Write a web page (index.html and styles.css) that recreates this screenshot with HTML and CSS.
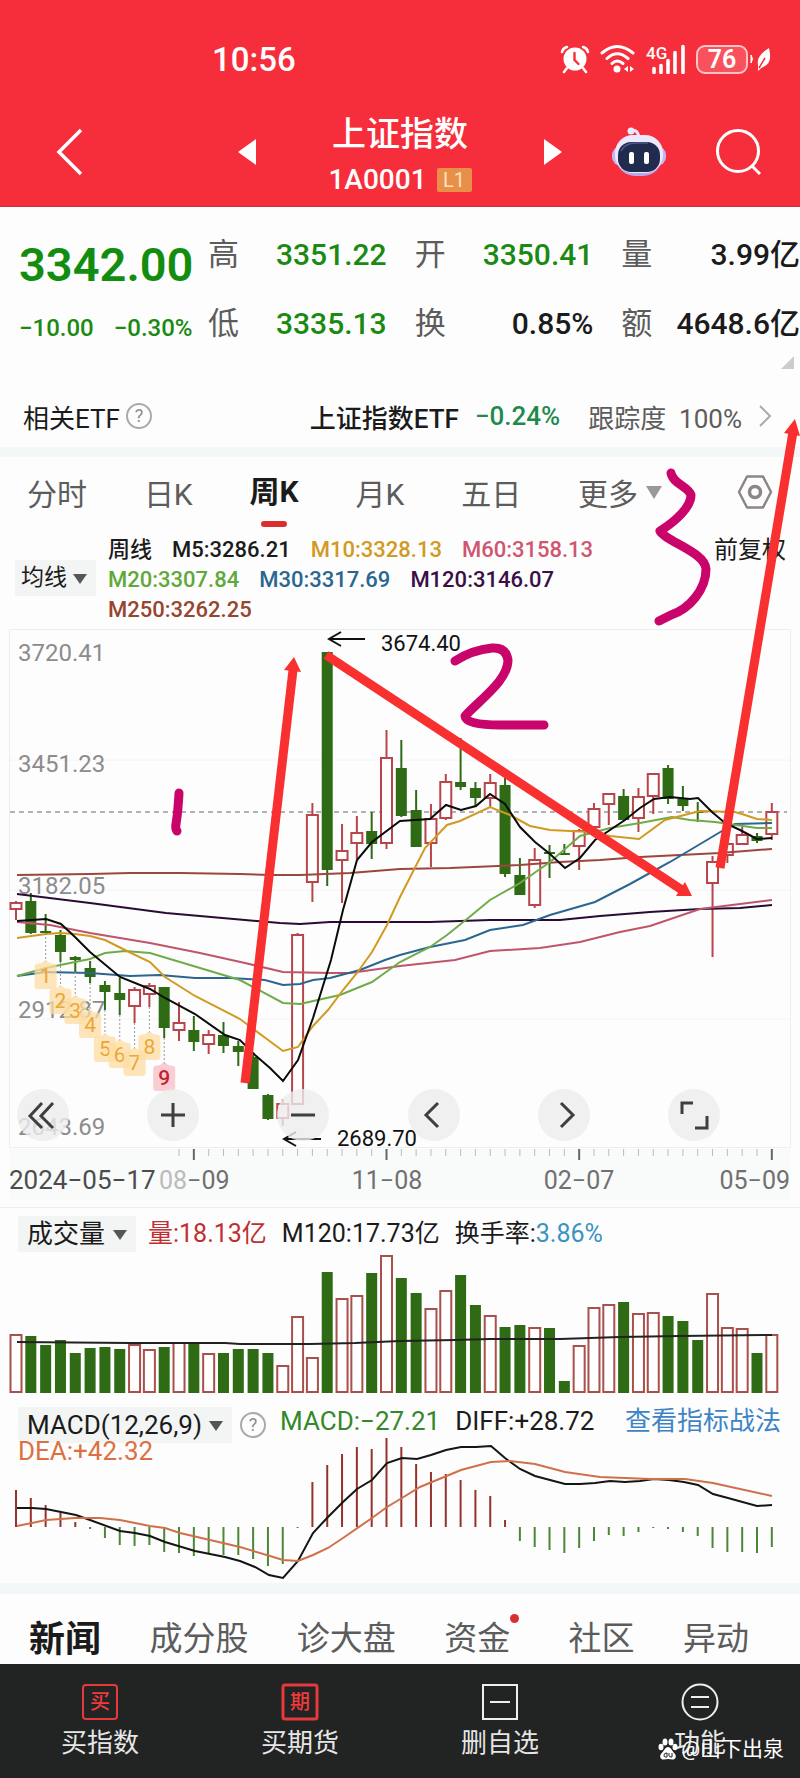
FILE: index.html
```html
<!DOCTYPE html>
<html lang="zh-CN">
<head>
    <meta charset="UTF-8">
    <meta name="viewport" content="width=device-width, initial-scale=1.0">
    <title>上证指数 1A0001</title>
    <link rel="stylesheet" href="styles.css">
</head>
<body>
<div class="page">
    <header class="header">
        <div class="status-bar">
            <span class="clock">10:56</span>
            <div class="status-icons">
                <svg width="30" height="30" viewBox="0 0 30 30" fill="none" stroke="#fff" stroke-linecap="round">
                    <circle cx="15" cy="15" r="11.5" fill="#fff" stroke="none"/>
                    <path d="M2 8Q3 4 7 3M28 8Q27 4 23 3M7 24l-3 4M23 24l3 4" stroke-width="2.6"/>
                    <path d="M14.500 9v7l4 4" stroke="#f62e3b" stroke-width="2.4"/>
                </svg>
                <svg width="36" height="30" viewBox="0 0 36 30" fill="none" stroke="#fff" stroke-width="3" stroke-linecap="round">
                    <path d="M2 9Q17-4 33 9M7 14.500Q17 5 28 14.500M12 19.500Q17 14.500 23 19.500"/>
                    <circle cx="17" cy="25" r="3.500" fill="#fff" stroke="none"/>
                    <path d="M24 25l4-3v6zM34 25l-4-3v6z" fill="#fff" stroke="none"/>
                </svg>
                <svg width="40" height="30" viewBox="0 0 40 30">
                    <text x="0" y="15" class="net-text">4G</text>
                    <path d="M8 28.500v-4M15 28.500v-7M22 28.500v-12M29 28.500v-20M37 28.500v-26" stroke="#fff" stroke-width="3.600" stroke-linecap="round"/>
                </svg>
                <span class="battery">76</span>
                <svg width="22" height="30" viewBox="0 0 22 30">
                    <path d="M1 11q3 4 0 8z" fill="#fff" stroke="#fff"/>
                    <path d="M8 21Q6 12 19 4Q23 20 13 23Q11 24 8 27z" fill="#fff"/>
                    <path d="M9 24L15 14" stroke="#f62e3b" stroke-width="1.5"/>
                </svg>
            </div>
        </div>
        <nav class="nav">
            <button class="icon-btn back" aria-label="返回">
                <svg width="28" height="48" viewBox="0 0 28 48" fill="none" stroke="#fff" stroke-width="3.500"><path d="M25 2L3 24L25 46"/></svg>
            </button>
            <div class="nav-center">
                <button class="icon-btn" aria-label="上一个">
                    <svg width="18" height="26" viewBox="0 0 18 26"><path d="M18 0v26L0 13z" fill="#fff"/></svg>
                </button>
                <div class="nav-title">
                    <h1>上证指数</h1>
                    <div class="code">1A0001 <span class="level">L1</span></div>
                </div>
                <button class="icon-btn" aria-label="下一个">
                    <svg width="18" height="26" viewBox="0 0 18 26"><path d="M0 0v26L18 13z" fill="#fff"/></svg>
                </button>
            </div>
            <div class="nav-right">
                <button class="icon-btn" aria-label="智能助手">
                    <svg width="54" height="50" viewBox="0 0 54 50">
                        <path d="M18 4q7-3 9 6" fill="none" stroke="#e6e4ff" stroke-width="3"/>
                        <circle cx="19" cy="4" r="3.500" fill="#e8e8ff"/>
                        <rect x="0" y="19" width="54" height="20" rx="9" fill="#c3b6f2"/>
                        <rect x="4" y="9" width="46" height="40" rx="19" fill="#b9a9ec"/>
                        <rect x="3" y="8" width="48" height="38" rx="18" fill="#ece9ff"/>
                        <rect x="6" y="15" width="42" height="30" rx="13" fill="#202b4d"/>
                        <path d="M9 24q4-8 15-8h12" fill="none" stroke="#4c5c8c" stroke-width="1.5"/>
                        <rect x="17" y="25" width="5" height="12" rx="2" fill="#fff"/>
                        <rect x="32" y="25" width="5" height="12" rx="2" fill="#fff"/>
                    </svg>
                </button>
                <button class="icon-btn" aria-label="搜索">
                    <svg width="46" height="48" viewBox="0 0 46 48" fill="none" stroke="#fff" stroke-width="3"><circle cx="23" cy="23" r="20.500"/><path d="M37 38l8 8"/></svg>
                </button>
            </div>
        </nav>
    </header>

    <main>
        <section class="quote">
            <div class="price-box">
                <div class="price">3342.00</div>
                <div class="change"><span>−10.00</span><span>−0.30%</span></div>
            </div>
            <dl class="stats">
                <div><dt>高</dt><dd class="down">3351.22</dd></div>
                <div><dt>开</dt><dd class="down">3350.41</dd></div>
                <div><dt>量</dt><dd>3.99亿</dd></div>
                <div><dt>低</dt><dd class="down">3335.13</dd></div>
                <div><dt>换</dt><dd>0.85%</dd></div>
                <div><dt>额</dt><dd>4648.6亿</dd></div>
            </dl>
            <span class="corner"></span>
        </section>

        <section class="etf">
            <span class="etf-label">相关ETF</span>
            <button class="help" aria-label="相关ETF说明">?</button>
            <a class="etf-link" href="#etf">
                <b>上证指数ETF</b>
                <span class="etf-change">−0.24%</span>
                <span class="track">跟踪度&nbsp; 100%</span>
                <svg width="14" height="24" viewBox="0 0 14 24" fill="none" stroke="#aaa" stroke-width="2"><path d="M2 2l10 10L2 22"/></svg>
            </a>
        </section>

        <nav class="periods">
            <a href="#min">分时</a>
            <a href="#day">日K</a>
            <a href="#week" class="active">周K</a>
            <a href="#month">月K</a>
            <a href="#five">五日</a>
            <button class="more">更多<i class="tri"></i></button>
            <button class="icon-btn" aria-label="图表设置">
                <svg width="36" height="36" viewBox="0 0 36 36" fill="none" stroke="#8c8686"><path d="M10 2.500h16L34 18l-8 15.500H10L2 18z" stroke-width="2.500" stroke-linejoin="round"/><circle cx="18" cy="18" r="5.500" stroke-width="3.500"/></svg>
            </button>
        </nav>

        <section class="averages">
            <div class="picker">
                <select class="picker-sm" aria-label="主图指标"><option>均线</option></select>
            </div>
            <div class="legend">
                <span>周线</span>
                <span>M5:3286.21</span>
                <span class="m10">M10:3328.13</span>
                <span class="m60">M60:3158.13</span>
                <span class="m20">M20:3307.84</span>
                <span class="m30">M30:3317.69</span>
                <span class="m120">M120:3146.07</span>
                <span class="m250">M250:3262.25</span>
            </div>
            <button class="adjust">前复权</button>
        </section>

        <section class="kline">
            <svg id="kline" class="chart" viewBox="0 625 800 575" role="img" aria-label="周K线图"></svg>
            <div class="tools">
                <button aria-label="更早"><svg viewBox="0 0 52 52"><path d="M25 14L13 27l12 12M36 14L24 27l12 12"/></svg></button>
                <button aria-label="放大"><svg viewBox="0 0 52 52"><path d="M26 14v24M14 26h24"/></svg></button>
                <button aria-label="缩小"><svg viewBox="0 0 52 52"><path d="M14 26h24"/></svg></button>
                <button aria-label="向左"><svg viewBox="0 0 52 52"><path d="M30 14L18 26l12 12"/></svg></button>
                <button aria-label="向右"><svg viewBox="0 0 52 52"><path d="M23 14l12 12l-12 12"/></svg></button>
                <button aria-label="全屏"><svg viewBox="0 0 52 52"><path d="M14 25V14h11M39 27v12H27"/></svg></button>
            </div>
        </section>

        <section class="volume">
            <div class="panel-head">
                <div class="picker">
                    <select class="picker-lg" aria-label="副图指标一"><option>成交量</option></select>
                </div>
                <span class="up">量:18.13亿</span>
                <span>M120:17.73亿</span>
                <span>换手率:<em>3.86%</em></span>
            </div>
            <svg id="volume" class="chart" viewBox="0 1252 800 148" role="img" aria-label="成交量"></svg>
        </section>

        <section class="macd">
            <div class="panel-head">
                <div class="picker">
                    <select class="picker-lg" aria-label="副图指标二"><option>MACD(12,26,9)</option></select>
                </div>
                <button class="help" aria-label="MACD说明">?</button>
                <span class="macd-value">MACD:−27.21</span>
                <span>DIFF:+28.72</span>
                <a href="#guide">查看指标战法</a>
            </div>
            <div class="dea">DEA:+42.32</div>
            <svg id="macd" class="chart" viewBox="0 1434 800 149" role="img" aria-label="MACD"></svg>
        </section>

        <nav class="news-tabs">
            <a href="#news" class="active">新闻</a>
            <a href="#members">成分股</a>
            <a href="#diagnose">诊大盘</a>
            <a href="#funds" class="dot">资金</a>
            <a href="#community">社区</a>
            <a href="#moves">异动</a>
        </nav>
    </main>

    <footer class="bottom-bar">
        <button>
            <svg width="38" height="38" viewBox="0 0 38 38"><rect x="2" y="2" width="34" height="34" rx="3" fill="none" stroke="#e5393c" stroke-width="2"/><text x="19" y="26" class="icon-text">买</text></svg>
            买指数
        </button>
        <button>
            <svg width="38" height="38" viewBox="0 0 38 38"><rect x="2" y="2" width="34" height="34" rx="2" fill="none" stroke="#e5393c" stroke-width="3"/><text x="19" y="26" class="icon-text">期</text></svg>
            买期货
        </button>
        <button>
            <svg width="38" height="38" viewBox="0 0 38 38" fill="none" stroke="#eee" stroke-width="2"><rect x="2" y="2" width="34" height="34"/><path d="M9 19h20"/></svg>
            删自选
        </button>
        <button>
            <svg width="38" height="38" viewBox="0 0 38 38" fill="none" stroke="#eee" stroke-width="2"><circle cx="19" cy="19" r="17.500"/><path d="M10 14h18M10 24h18"/></svg>
            功能
        </button>
        <div class="author">
            <svg width="20" height="22" viewBox="0 0 20 22" fill="#fff"><ellipse cx="3" cy="9" rx="2.500" ry="3.200"/><ellipse cx="7" cy="4" rx="2.500" ry="3.500"/><ellipse cx="13" cy="4" rx="2.500" ry="3.500"/><ellipse cx="17" cy="9" rx="2.500" ry="3.200"/><path d="M10 9c3 0 4 4 7 7c2 3 0 6-3 5.500q-4-1-8 0C3 22 1 19 3 16c3-3 4-7 7-7z"/><path d="M6 17q0-2 3-2v4H7q-1 0-1-2M11 15v3q0 1 3 1v-4" fill="none" stroke="#222" stroke-width="1"/></svg>
            @山下出泉
        </div>
    </footer>

    <!-- hand drawn wave marks 1, 2, 3 -->
    <svg class="marks" viewBox="0 0 800 1778" aria-hidden="true">
        <g stroke="#f8302f" stroke-width="9">
            <path d="M245 1083L293 670"/>
            <path d="M326 655L682 890"/>
            <path d="M720 868L793 432"/>
        </g>
        <g fill="#f8302f">
            <path d="M294 657L284 670L301 672z"/>
            <path d="M692 896L685 882L676 896z"/>
            <path d="M795 419L784 433L800 436z"/>
        </g>
        <g fill="none" stroke="#c9046b" stroke-width="9" stroke-linecap="round" stroke-linejoin="round">
            <path d="M179 793Q178 812 176 824Q175 829 177 831"/>
            <path d="M455 661Q472 650 492 648Q506 647 508 660C508 680 482 698 465 716Q466 725 500 725L544 725"/>
            <path d="M671 473C673 484 688 486 691 495C691 507 676 521 660 531C665 541 705 552 706 569C706 590 689 609 671 615L659 621"/>
        </g>
    </svg>
</div>

<script>
    const RED = '#b8454a';
    const GREEN = '#2f6b14';
    const START = 16;
    const STEP = 14.82;
    const xAt = i => START + STEP * i;

    // color, high, body top, body bottom, low
    const candles = [
        ['r', 901, 902, 909, 920], ['g', 893, 901, 933, 934], ['g', 914, 931, 933, 933], ['g', 930, 935, 952, 962],
        ['g', 956, 957, 960, 972], ['g', 961, 968, 977, 983], ['g', 981, 985, 992, 1010], ['g', 978, 993, 1000, 1015],
        ['r', 987, 989, 1006, 1023], ['r', 983, 985, 994, 1007], ['g', 987, 987, 1028, 1038], ['r', 1002, 1022, 1030, 1041],
        ['g', 1016, 1030, 1042, 1051], ['r', 1030, 1034, 1044, 1054], ['g', 1022, 1035, 1046, 1053], ['g', 1041, 1046, 1052, 1066],
        ['g', 1055, 1057, 1089, 1089], ['g', 1094, 1095, 1119, 1120], ['r', 1099, 1103, 1118, 1126], ['r', 933, 934, 1104, 1104],
        ['r', 803, 814, 882, 902], ['g', 652, 652, 870, 886], ['r', 824, 850, 860, 903], ['r', 816, 832, 843, 859],
        ['g', 812, 831, 844, 859], ['r', 730, 757, 843, 849], ['g', 740, 768, 816, 817], ['g', 790, 810, 847, 847],
        ['r', 804, 818, 843, 867], ['r', 774, 781, 818, 820], ['g', 738, 782, 787, 790], ['g', 782, 788, 798, 806],
        ['r', 774, 782, 798, 807], ['g', 778, 785, 874, 877], ['g', 858, 875, 895, 895], ['r', 848, 859, 905, 908],
        ['g', 845, 852, 854, 878], ['g', 844, 853, 855, 855], ['r', 829, 830, 846, 870], ['r', 803, 808, 827, 827],
        ['r', 793, 793, 804, 825], ['g', 789, 796, 820, 821], ['r', 788, 796, 818, 832], ['r', 773, 773, 796, 814],
        ['g', 765, 768, 799, 804], ['g', 786, 799, 806, 811], ['g', 802, 812, 813, 822], ['r', 856, 861, 883, 957],
        ['r', 840, 843, 855, 863], ['r', 827, 834, 844, 845], ['g', 833, 836, 841, 843], ['r', 803, 811, 834, 840]
    ];

    const averages = {
        '#9c463d': '17,875 90,874 130,873 180,873 240,874 270,875 300,875 350,873 400,869 450,868 520,865 560,862 600,860 640,857 680,855 720,853 772,849',
        '#2a0b33': '17,894 90,903 166,913 245,920 280,923 300,924 330,922 430,922 490,920 560,920 600,916 650,912 700,909 740,908 772,905',
        '#bf556b': '17,922 50,925 90,933 150,943 200,953 245,963 283,972 330,973 350,973 400,966 455,960 490,951 540,948 580,942 620,932 650,926 700,909 740,904 772,900',
        '#2a668f': '17,976 46,972 90,973 130,976 160,975 195,978 230,978 265,980 283,985 300,984 313,980 330,978 360,970 385,960 400,955 430,947 465,940 490,930 523,925 550,915 595,902 630,884 670,862 722,831 735,824 772,823',
        '#70ab4a': '17,976 46,968 75,962 90,959 105,953 125,951 150,953 200,968 240,980 283,1003 300,1004 340,995 372,982 400,962 430,947 447,935 467,919 490,900 520,883 550,862 580,836 610,828 640,823 672,817 690,820 715,822 757,828 772,828',
        '#d19a22': '17,938 46,934 60,933 75,934 90,936 105,940 125,950 150,962 165,977 195,996 240,1019 283,1051 298,1047 313,1026 328,1010 343,990 357,973 372,952 387,925 400,897 425,848 447,825 460,821 490,807 510,815 530,826 550,830 590,832 610,836 639,839 665,820 700,811 735,812 745,815 757,819 772,820',
        '#0b0b0b': '17,921 46,919 61,924 75,937 90,952 120,977 150,989 165,998 195,1014 225,1035 240,1040 255,1055 270,1068 283,1081 298,1060 313,1018 331,960 343,910 357,860 372,842 400,821 430,819 446,805 461,810 476,806 490,794 505,804 520,827 535,842 550,854 565,868 580,858 595,840 625,820 640,808 654,799 670,797 690,799 698,798 712,812 725,823 740,830 757,839 772,838'
    };

    const line = (x1, y1, x2, y2, color, width, extra = '') =>
        `<line x1="${x1}" y1="${y1}" x2="${x2}" y2="${y2}" stroke="${color}" stroke-width="${width}" ${extra}/>`;
    const poly = (points, color) =>
        `<polyline points="${points}" fill="none" stroke="${color}" stroke-width="2"/>`;
    const text = (x, y, value, cls, extra = '') =>
        `<text x="${x}" y="${y}" class="${cls}" ${extra}>${value}</text>`;

    function drawKline() {
        let out = '<rect x="10" y="1149" width="780" height="51" fill="#f9fafa"/>';
        out += '<rect x="9.5" y="629.5" width="781" height="518" fill="none" stroke="#eee"/>';
        [760, 890, 1019].forEach(y => out += line(10, y, 790, y, '#f4f4f4', 1));
        out += line(10, 812, 787, 812, '#999', 1.5, 'stroke-dasharray="5 4"');

        [['3720.41', 661], ['3451.23', 772], ['3182.05', 894], ['2912.87', 1018], ['2643.69', 1135]]
            .forEach(([v, y]) => out += text(18, y, v, 'price-label'));

        candles.forEach(([type, high, top, bottom, low], i) => {
            const x = xAt(i);
            if (type === 'g') {
                out += line(x, high, x, low, GREEN, 2);
                out += `<rect x="${x - 5.5}" y="${top}" width="11" height="${bottom - top}" fill="${GREEN}"/>`;
            } else {
                out += line(x, high, x, top, RED, 2) + line(x, bottom, x, low, RED, 2);
                out += `<rect x="${x - 5.5}" y="${top + 1}" width="11" height="${bottom - top - 1}" fill="#fff" stroke="${RED}" stroke-width="2"/>`;
            }
        });
        for (const color in averages) out += poly(averages[color], color);

        // nine-turn markers
        [975, 1000, 1010, 1024, 1048, 1054, 1062, 1046, 1077].forEach((y, n) => {
            const x = xAt(n + 2);
            const last = n === 8;
            out += line(x, candles[n + 2][4], x, y - 13, '#999', 1, 'stroke-dasharray="2 2"');
            out += `<path d="M${x - 9} ${y - 11}L${x - 4} ${y - 12}L${x} ${y - 15}L${x + 4} ${y - 12}L${x + 9} ${y - 11}Q${x + 11} ${y - 11} ${x + 11} ${y - 8}V${y + 11}Q${x + 11} ${y + 14} ${x + 8} ${y + 14}H${x - 8}Q${x - 11} ${y + 14} ${x - 11} ${y + 11}V${y - 8}Q${x - 11} ${y - 11} ${x - 9} ${y - 11}z" fill="${last ? '#f7bcc2' : '#fcdca2'}" opacity=".75"/>`;
            out += text(x, y + 8, n + 1, last ? 'turn turn-last' : 'turn');
        });

        out += '<path d="M365 639H329M341 632L329 639L341 646" fill="none" stroke="#111" stroke-width="2"/>';
        out += text(381, 651, '3674.40', 'peak');
        out += '<path d="M321 1139H284M296 1132L284 1139L296 1146" fill="none" stroke="#111" stroke-width="2"/>';
        out += text(337, 1146, '2689.70', 'peak');

        for (let i = 11; i < 52; i++) {
            const major = (i - 12) % 13 === 0;
            out += line(xAt(i), 1149, xAt(i), major ? 1160 : 1156, major ? '#666' : '#bbb', major ? 2 : 1);
        }
        out += text(9, 1189, '2024−05−17', 'date date-first');
        out += text(159, 1189, '<tspan fill="#bbb">08</tspan>−09', 'date');
        out += text(387, 1189, '11−08', 'date', 'text-anchor="middle"');
        out += text(579, 1189, '02−07', 'date', 'text-anchor="middle"');
        out += text(790, 1189, '05−09', 'date', 'text-anchor="end"');
        document.getElementById('kline').innerHTML = out;
    }

    function drawVolume() {
        const base = 1393;
        const tops = [1334, 1336, 1345, 1340, 1353, 1348, 1347, 1349, 1344, 1349, 1347, 1342, 1344, 1353, 1353, 1349, 1349, 1353,
            1365, 1316, 1357, 1272, 1298, 1295, 1273, 1255, 1278, 1293, 1308, 1290, 1275, 1305, 1315, 1327, 1325, 1327,
            1328, 1381, 1345, 1307, 1304, 1302, 1313, 1312, 1316, 1321, 1340, 1293, 1327, 1328, 1353, 1334];
        let out = '';
        tops.forEach((top, i) => {
            const x = xAt(i);
            out += candles[i][0] === 'g'
                ? `<rect x="${x - 5.5}" y="${top}" width="11" height="${base - top}" fill="${GREEN}"/>`
                : `<rect x="${x - 5.5}" y="${top + 1}" width="11" height="${base - top - 2}" fill="#fff" stroke="#a8504c" stroke-width="2"/>`;
        });
        out += poly('17,1342 130,1343 225,1343 240,1344 310,1344 355,1343 400,1341 455,1340 490,1339 560,1339 620,1337 680,1336 772,1335', '#222');
        document.getElementById('volume').innerHTML = out;
    }

    function drawMacd() {
        const zero = 1527;
        const ends = [1490, 1498, 1505, 1513, 1522, 1529, 1538, 1545, 1546, 1545, 1552, 1553, 1556, 1554, 1555, 1555, 1559, 1566,
            1564, 1528, 1482, 1465, 1454, 1447, 1449, 1438, 1447, 1464, 1472, 1474, 1480, 1490, 1496, 1520, 1541, 1547,
            1550, 1553, 1548, 1541, 1535, 1536, 1532, 1528, 1529, 1532, 1536, 1548, 1552, 1552, 1553, 1547];
        let out = '';
        ends.forEach((y, i) => out += line(xAt(i), zero, xAt(i), y, y < zero ? '#96322d' : '#4a8737', 2));
        out += poly('17,1508 32,1508 46,1509 76,1515 90,1520 120,1531 135,1533 150,1536 165,1542 195,1551 225,1557 240,1561 255,1567 269,1575 283,1578 298,1561 313,1533 328,1517 343,1502 357,1489 372,1480 387,1463 402,1458 417,1459 431,1455 446,1450 461,1447 476,1447 491,1446 505,1458 520,1469 535,1476 550,1480 565,1484 580,1484 595,1483 610,1481 625,1482 640,1481 654,1479 669,1480 684,1482 698,1485 713,1494 728,1498 757,1506 772,1505', '#151515');
        out += poly('17,1526 32,1523 46,1520 75,1518 100,1518 120,1520 150,1526 165,1528 180,1533 210,1540 240,1547 270,1556 283,1560 298,1561 313,1555 328,1548 343,1538 372,1518 387,1507 402,1498 420,1487 461,1470 491,1462 510,1461 535,1464 565,1472 600,1477 650,1479 685,1479 713,1483 740,1489 772,1496', '#d0704a');
        document.getElementById('macd').innerHTML = out;
    }

    drawKline();
    drawVolume();
    drawMacd();
</script>
</body>
</html>
```
FILE: styles.css
```css
:root {
    --red: #f62e3b;
    --green: #1a8a12;
    --text: #1b1b1b;
    --muted: #5c5c5c;
    --band: #f4f7f7;
}

* {
    margin: 0;
    padding: 0;
    box-sizing: border-box;
}

body {
    font-family: Roboto, "Noto Sans CJK SC", sans-serif;
    color: var(--text);
    background-color: #fdfdfd;
}

button,
select {
    font: inherit;
    color: inherit;
    background: none;
    border: none;
    cursor: pointer;
}

a {
    color: inherit;
    text-decoration: none;
}

svg {
    display: block;
}

.page {
    position: relative;
    overflow: hidden;
}

.header {
    background-color: var(--red);
    color: white;
    border-bottom: 1px solid #c43340;
}

.status-bar {
    display: flex;
    justify-content: space-between;
    align-items: center;
    height: 108px;
    padding: 10px 28px 0 212px;
}

.clock {
    font-size: 33px;
    font-weight: 500;
}

.status-icons {
    display: flex;
    align-items: center;
    gap: 10px;
}

.net-text {
    font-size: 17px;
    font-weight: 500;
    fill: white;
}

.battery {
    width: 52px;
    border: 2px solid #ffc4c8;
    border-radius: 9px;
    background-color: #f9525d;
    font-size: 25px;
    font-weight: 600;
    line-height: 25px;
    text-align: center;
}

.battery + svg {
    margin-left: -8px;
}

.nav {
    display: grid;
    grid-template-columns: 1fr 324px 1fr;
    align-items: center;
    padding: 4px 0 8px;
}

.icon-btn {
    display: block;
}

.nav .icon-btn {
    padding-bottom: 6px;
}

.back {
    justify-self: start;
    margin-left: 56px;
}

.nav-center {
    display: flex;
    justify-content: space-between;
    align-items: center;
}

.nav-title {
    text-align: center;
}

.nav-title h1 {
    font-size: 34px;
    font-weight: 500;
    line-height: 44px;
}

.code {
    display: flex;
    align-items: center;
    gap: 10px;
    margin-top: 6px;
    font-size: 28px;
    font-weight: 500;
    line-height: 36px;
}

.level {
    width: 35px;
    background-color: #e8904a;
    color: #ffe0bd;
    border-radius: 2px;
    font-size: 20px;
    font-weight: 400;
    line-height: 24px;
    text-align: center;
}

.nav-right {
    display: flex;
    justify-content: flex-end;
    align-items: center;
    gap: 49px;
    padding-right: 39px;
}

.quote {
    position: relative;
    display: grid;
    grid-template-columns: 189px 1fr;
    padding: 28px 0 31px 19px;
}

.price {
    color: #128d10;
    font-size: 47px;
    font-weight: 600;
    line-height: 60px;
}

.change {
    display: flex;
    gap: 20px;
    margin-top: 18px;
    color: var(--green);
    font-size: 24px;
    font-weight: 500;
    line-height: 30px;
}

.stats {
    display: grid;
    grid-template-columns: repeat(3, 1fr);
    gap: 29px 28px;
    font-size: 30px;
    line-height: 40px;
}

.stats div {
    display: flex;
    justify-content: space-between;
}

.stats dt {
    color: var(--muted);
    font-size: 31px;
}

.stats dd {
    font-weight: 500;
    white-space: nowrap;
}

.down {
    color: var(--green);
}

.corner {
    position: absolute;
    right: 6px;
    bottom: 6px;
    border-left: 13px solid transparent;
    border-bottom: 13px solid #ccc;
}

.etf {
    display: flex;
    align-items: center;
    height: 82px;
    padding: 10px 28px 0 23px;
    border-bottom: 10px solid var(--band);
    font-size: 26px;
}

.etf-label {
    font-size: 26px;
}

.help {
    flex: none;
    width: 26px;
    height: 26px;
    margin-left: 6px;
    border: 2px solid #aaa;
    border-radius: 50%;
    color: #8c8c8c;
    font-size: 18px;
    line-height: 22px;
    text-align: center;
}

.etf-link {
    display: flex;
    align-items: center;
    gap: 16px;
    margin-left: auto;
}

.etf-link b {
    font-weight: 500;
}

.etf-change {
    margin-right: 12px;
    color: #1d8a4c;
    font-weight: 500;
}

.track {
    color: var(--muted);
}

.periods {
    display: flex;
    justify-content: space-between;
    align-items: center;
    height: 70px;
    padding: 0 27px;
    color: var(--muted);
    font-size: 30px;
}

.periods .active {
    position: relative;
    color: var(--text);
    font-weight: 700;
    line-height: 70px;
}

.periods .active::after {
    content: "";
    position: absolute;
    left: 50%;
    bottom: 0;
    width: 26px;
    height: 6px;
    margin-left: -13px;
    border-radius: 3px;
    background-color: #d9302f;
}

.periods .icon-btn {
    margin-left: 18px;
}

.more {
    display: flex;
    align-items: center;
    gap: 8px;
}

.tri {
    border: 8px solid transparent;
    border-top: 13px solid #999;
    border-bottom: none;
}

.averages {
    display: flex;
    padding: 8px 14px 0 15px;
    font-size: 22px;
    line-height: 30px;
}

.picker {
    position: relative;
    flex: none;
    background-color: #f3f4f4;
}

.picker::after {
    content: "";
    position: absolute;
    right: 9px;
    top: 50%;
    margin-top: -4px;
    border: 7px solid transparent;
    border-top: 10px solid #555;
    border-bottom: none;
    pointer-events: none;
}

.picker select {
    appearance: none;
    display: block;
    height: 36px;
}

.averages .picker {
    align-self: flex-start;
    margin: 25px 12px 0 0;
}

.picker-sm {
    padding: 0 29px 0 6px;
    font-size: 23px;
}

.picker-lg {
    padding: 0 30px 0 9px;
    font-size: 26px;
}

.legend {
    flex: 1;
    display: flex;
    flex-wrap: wrap;
    gap: 0 20px;
    padding-right: 40px;
    font-weight: 500;
}

.m10 {
    color: #d19a22;
}

.m20 {
    color: #5fa83a;
}

.m30 {
    color: #2a668f;
}

.m60 {
    color: #cf5570;
}

.m120 {
    color: #3a0f45;
}

.m250 {
    color: #96452f;
}

.adjust {
    align-self: flex-start;
    font-size: 24px;
    line-height: 30px;
}

.chart {
    width: 100%;
    height: auto;
}

.price-label {
    font-size: 24px;
    fill: #8c8c8c;
}

.peak {
    font-size: 22px;
    fill: #111;
}

.date {
    font-size: 25px;
    fill: #707070;
}

.date-first {
    font-size: 26px;
    fill: #4c4c4c;
}

.turn {
    font-size: 21px;
    fill: #eda534;
    text-anchor: middle;
}

.turn-last {
    fill: #c2222e;
    font-weight: 500;
}

.kline {
    position: relative;
}

.tools {
    position: absolute;
    left: 17px;
    right: 80px;
    bottom: 59px;
    display: flex;
    justify-content: space-between;
}

.tools button {
    width: 52px;
    height: 52px;
    border-radius: 50%;
    background-color: rgba(236, 236, 238, 0.8);
}

.tools path {
    fill: none;
    stroke: #3f3f42;
    stroke-width: 3;
}

.volume {
    margin-top: 7px;
    border-top: 1px solid #eee;
}

.panel-head {
    display: flex;
    align-items: center;
    font-size: 26px;
    line-height: 36px;
    white-space: nowrap;
}

.volume .panel-head {
    gap: 15px;
    padding: 8px 18px 0;
    font-size: 25px;
}

.volume .picker {
    margin-right: -3px;
}

.up {
    color: #c02f30;
}

.volume em {
    color: #3a94bf;
    font-style: normal;
}

.macd {
    border-bottom: 11px solid var(--band);
}

.macd .panel-head {
    padding: 7px 19px 0 18px;
}

.macd .help {
    margin-left: 8px;
}

.macd .panel-head > span {
    margin: -8px 0 0 15px;
}

.macd .panel-head a {
    margin: -8px 0 0 auto;
    color: #3d84c6;
}

.macd .panel-head .macd-value {
    margin-left: 14px;
    color: #35882a;
}

.dea {
    position: relative;
    margin-top: -6px;
    padding-left: 18px;
    color: #dd7040;
    font-size: 26px;
    line-height: 28px;
}

.macd .chart {
    margin-top: -31px;
}

.news-tabs {
    display: flex;
    justify-content: space-between;
    align-items: center;
    height: 70px;
    padding: 14px 51px 0 29px;
    color: var(--muted);
    font-size: 33px;
}

.news-tabs .active {
    color: var(--text);
    font-size: 36px;
    font-weight: 700;
}

.dot {
    position: relative;
    margin-right: 10px;
}

.dot::after {
    content: "";
    position: absolute;
    right: -9px;
    top: 2px;
    width: 9px;
    height: 9px;
    border-radius: 50%;
    background-color: #d8302f;
}

.bottom-bar {
    position: relative;
    display: grid;
    grid-template-columns: repeat(4, 1fr);
    height: 114px;
    padding-top: 19px;
    background-color: #222323;
    color: #e6e6e6;
    font-size: 26px;
    line-height: 36px;
}

.bottom-bar button {
    display: flex;
    flex-direction: column;
    align-items: center;
    gap: 4px;
}

.icon-text {
    font-size: 20px;
    font-weight: 500;
    fill: #f03a3c;
    text-anchor: middle;
}

.author {
    position: absolute;
    right: 16px;
    bottom: 14px;
    display: flex;
    align-items: center;
    gap: 3px;
    color: white;
    font-size: 21px;
    line-height: 30px;
}

.marks {
    position: absolute;
    top: 0;
    left: 0;
    width: 100%;
    pointer-events: none;
}
```
